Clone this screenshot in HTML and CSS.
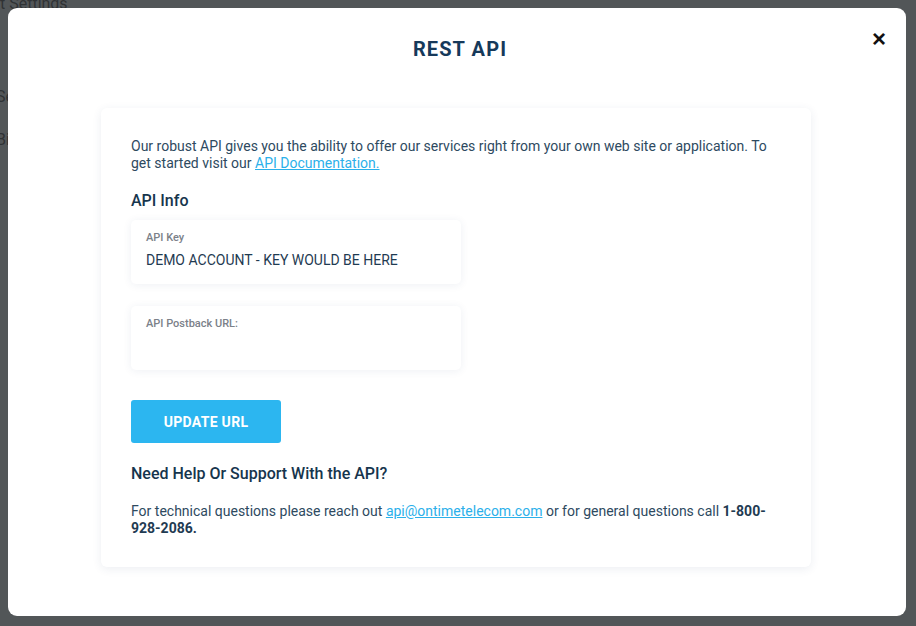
FILE: index.html
```html
<!DOCTYPE html>
<html lang="en">
<head>
  <meta charset="UTF-8" />
  <meta name="viewport" content="width=device-width, initial-scale=1.0" />
  <title>REST API</title>
  <link rel="stylesheet" href="styles.css">
</head>
<body>
  <div class="page">
    <h2 class="page-title">Account Settings</h2>
    <p class="page-item">Security</p>
    <p class="page-item">Billing</p>
  </div>

  <div class="overlay">
    <div class="modal">
      <button class="close-btn" aria-label="Close">&times;</button>
      <h1 class="modal-title">REST API</h1>

      <div class="card">
        <p class="intro">Our robust API gives you the ability to offer our services right from your own web site or application. To get started visit our <a href="#">API Documentation.</a></p>

        <h3>API Info</h3>
        <div class="field">
          <label>API Key</label>
          <div class="field-value">DEMO ACCOUNT - KEY WOULD BE HERE</div>
        </div>
        <div class="field">
          <label>API Postback URL:</label>
          <div class="field-value"></div>
        </div>

        <button class="button">UPDATE URL</button>

        <h3 class="help-title">Need Help Or Support With the API?</h3>
        <p class="help">For technical questions please reach out <a href="#">api@ontimetelecom.com</a> or for general questions call <strong>1-800-928-2086.</strong></p>
      </div>
    </div>
  </div>
</body>
</html>
```

FILE: styles.css
```css
body { font-family: Roboto, "Liberation Sans", sans-serif; margin: 0; padding: 0; background: #f4f6f8; color: #2e4a5f; }
.page { padding: 0; height: 626px; overflow: hidden; }
.page-title { margin: -6px 0 0 -54px; font-size: 16px; font-weight: 400; color: #333; }
.page-item { margin: 74px 0 0 -4px; font-size: 16px; color: #333; }
.page-item + .page-item { margin-top: 24px; }

.overlay { position: fixed; inset: 0; background: rgba(46, 50, 52, 0.82); padding: 8px 10px 10px 8px; box-sizing: border-box; }
.modal { position: relative; background: #fff; border-radius: 9px; height: 608px; box-sizing: border-box; padding: 26px 95px 0 93px; }
.close-btn { position: absolute; top: 19px; right: 20px; background: none; border: none; font-size: 24px; font-weight: bold; color: #111; cursor: pointer; line-height: 1; padding: 0; }
.modal-title { margin: 0 0 44px 8px; text-align: center; font-size: 20px; font-weight: 700; letter-spacing: 1.1px; color: #16395a; line-height: 30px; }

.card { background: #fff; border-radius: 6px; box-shadow: 0 2px 10px rgba(40, 70, 110, 0.09); padding: 30px 30px 30px; }
.card p { margin: 0; font-size: 14px; line-height: 17px; }
.card a { color: #2bb0ea; }
.card h3 { margin: 18px 0 8px; font-size: 16px; font-weight: 500; color: #16354d; line-height: 22px; }

.field { width: 330px; height: 64px; box-sizing: border-box; border-radius: 5px; box-shadow: 0 1px 8px rgba(40, 70, 110, 0.08); padding: 11px 15px 0; margin-bottom: 22px; }
.field label { display: block; font-size: 11px; color: #7b8189; font-weight: 500; line-height: 14px; }
.field-value { font-size: 14px; color: #1f3b52; margin-top: 6px; line-height: 18px; }

.button { display: block; margin-top: 30px; width: 150px; height: 43px; background: #2cb6f0; color: #fff; border: none; border-radius: 3px; font-family: inherit; font-size: 14px; font-weight: 700; letter-spacing: 0.3px; cursor: pointer; }
.card .help-title { margin-top: 20px; margin-bottom: 18px; }
.help strong { color: #1f3b52; font-weight: 700; }
```
